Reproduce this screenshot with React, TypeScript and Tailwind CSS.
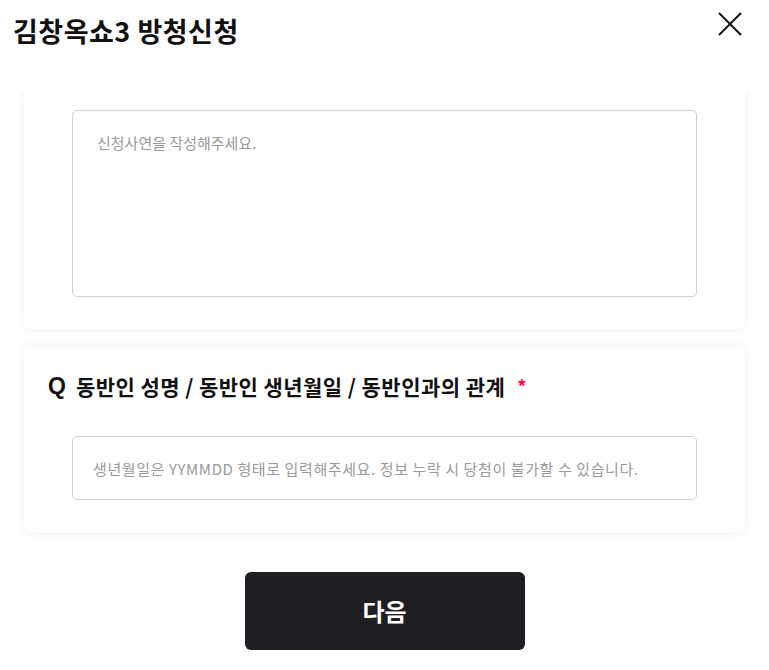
import React from 'react';

const CloseIcon: React.FC = () => (
    <svg width="24" height="24" viewBox="0 0 24 24" fill="none" stroke="#111" strokeWidth="2">
        <line x1="1" y1="1" x2="23" y2="23" />
        <line x1="23" y1="1" x2="1" y2="23" />
    </svg>
);

const App: React.FC = () => {
    return (
        <div className="w-[769px] h-[670px] bg-white overflow-hidden flex flex-col font-['Noto_Sans_CJK_KR','Noto_Sans',sans-serif] text-[#111]">
            <header className="relative z-10 h-[90px] shrink-0 bg-white flex items-start justify-between pl-[13px] pr-[27px]">
                <h1 className="mt-[12px] text-[27px] leading-[38px] font-bold tracking-[0.5px]">김창옥쇼3 방청신청</h1>
                <button className="mt-[12px]" aria-label="닫기">
                    <CloseIcon />
                </button>
            </header>

            <div className="flex-1 overflow-hidden px-6">
                <div className="bg-white rounded-b-md shadow-[0_0_12px_rgba(0,0,0,0.07)] px-12 pt-5 pb-8">
                    <textarea
                        className="block w-full h-[187px] resize-none border border-[#d0d0d0] rounded-[5px] pl-[24px] pr-[20px] pt-[20px] text-[15px] leading-[24px] outline-none placeholder:text-[#9a9a9a]"
                        placeholder="신청사연을 작성해주세요."
                    />
                </div>

                <div className="mt-[18px] bg-white rounded-md shadow-[0_0_12px_rgba(0,0,0,0.07)] pt-6 pb-8">
                    <div className="h-[30px] flex items-center px-6">
                        <span className="font-['Liberation_Sans',sans-serif] font-bold text-[23px] leading-none mr-[10px]">Q</span>
                        <span className="text-[21px] font-bold leading-none tracking-[0.45px]">동반인 성명 / 동반인 생년월일 / 동반인과의 관계</span>
                        <span className="ml-3 text-[18px] font-bold text-[#ff0a3c] leading-none">*</span>
                    </div>
                    <div className="px-12 mt-[35px]">
                        <input
                            className="block w-full h-[64px] border border-[#d0d0d0] rounded-[5px] px-5 text-[15px] tracking-[0.6px] outline-none placeholder:text-[#9a9a9a]"
                            placeholder="생년월일은 YYMMDD 형태로 입력해주세요. 정보 누락 시 당첨이 불가할 수 있습니다."
                        />
                    </div>
                </div>

                <button className="block mx-auto mt-[40px] w-[280px] h-[78px] rounded-md bg-[#1f1f23] text-white text-[24px] font-bold">
                    다음
                </button>
            </div>
        </div>
    );
};

export default App;
